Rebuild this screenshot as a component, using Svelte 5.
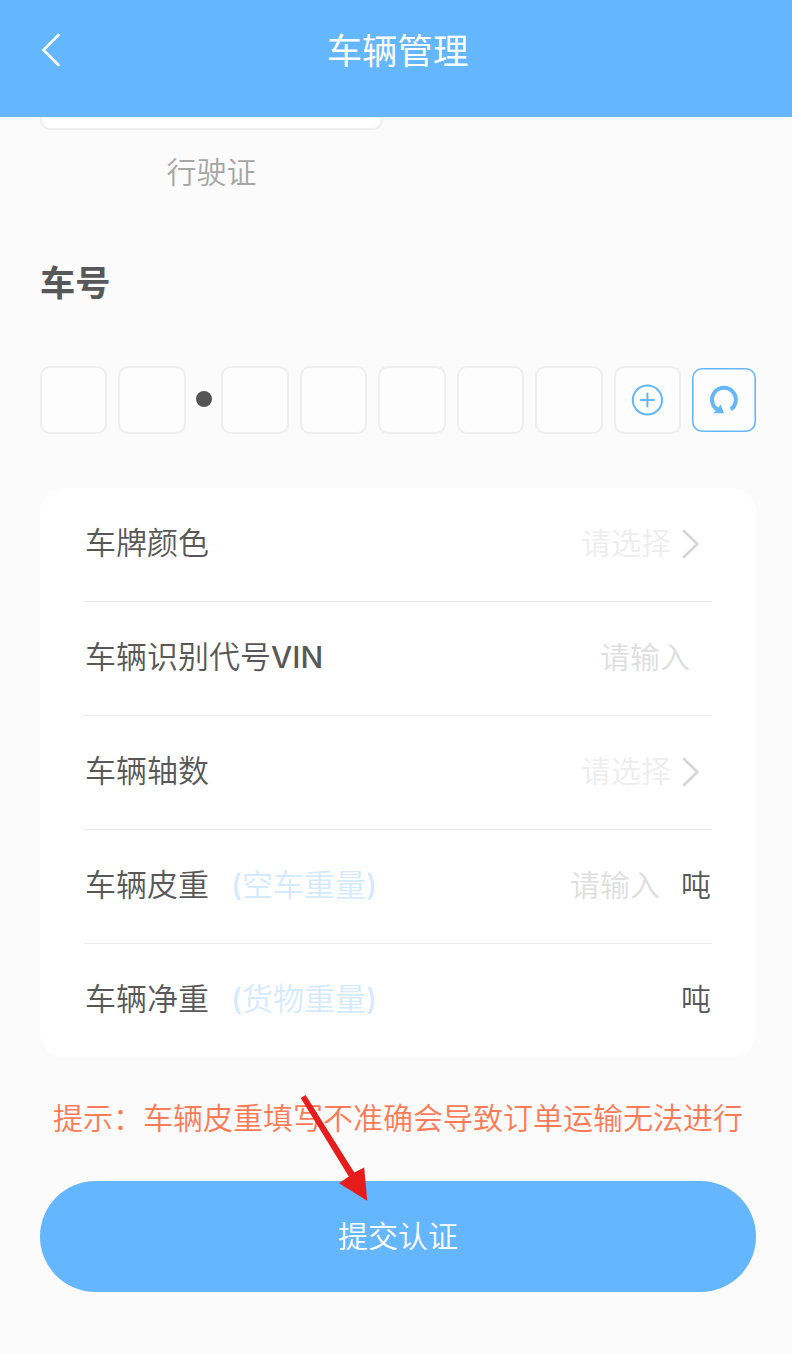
<script lang="ts">
	type Row = {
		label: string;
		latin?: string;
		note?: string;
		placeholder?: string;
		select?: boolean;
		unit?: string;
	};

	const prefix = [0, 1];
	const cells = [2, 3, 4, 5, 6];

	const rows: Row[] = [
		{ label: '车牌颜色', placeholder: '请选择', select: true },
		{ label: '车辆识别代号', latin: 'VIN', placeholder: '请输入' },
		{ label: '车辆轴数', placeholder: '请选择', select: true },
		{ label: '车辆皮重', note: '空车重量', placeholder: '请输入', unit: '吨' },
		{ label: '车辆净重', note: '货物重量', unit: '吨' }
	];
</script>

<div class="page">
	<header class="header">
		<svg class="header__back" width="20" height="34" viewBox="0 0 20 34">
			<path d="M17.5 2 2.5 17 17.5 32" />
		</svg>
		<h1 class="header__title">车辆管理</h1>
	</header>

	<main class="content">
		<div class="license">
			<div class="license__photo"></div>
			<div class="license__caption">行驶证</div>
		</div>

		<h2 class="subtitle">车号</h2>

		<div class="plate">
			{#each prefix as cell (cell)}
				<div class="plate__cell"></div>
			{/each}
			<span class="plate__dot"></span>
			{#each cells as cell (cell)}
				<div class="plate__cell"></div>
			{/each}
			<div class="plate__cell">
				<svg width="32" height="32" viewBox="0 0 32 32" fill="none" stroke="#64b6ff" stroke-width="2">
					<circle cx="16.4" cy="16" r="14.6" />
					<path d="M9.2 16h14.4M16.4 8.8v14.4" />
				</svg>
			</div>
			<div class="plate__reset">
				<svg width="30" height="30" viewBox="0 0 30 30">
					<path d="M8 24.4A11.9 11.9 0 1 1 21.8 24.4" fill="none" stroke="#64b6ff" stroke-width="4" />
					<path d="M11.6 19.4 15 28.2H4.8Z" fill="#64b6ff" />
				</svg>
			</div>
		</div>

		<div class="card">
			{#each rows as row (row.label)}
				<div class="row">
					<span class="row__label">{row.label}{#if row.latin}<b>{row.latin}</b>{/if}</span>
					{#if row.note}<span class="row__note"><b>(</b>{row.note}<b>)</b></span>{/if}
					<div class="row__value" class:row__value--select={row.select} class:row__value--unit={row.unit}>
						{#if row.placeholder}<span class="row__placeholder">{row.placeholder}</span>{/if}
						{#if row.select}
							<svg width="18" height="30" viewBox="0 0 18 30">
								<path d="M2 2 15.3 15 2 28" />
							</svg>
						{/if}
						{#if row.unit}<span class="row__unit">{row.unit}</span>{/if}
					</div>
				</div>
			{/each}
		</div>

		<p class="hint">提示：车辆皮重填写不准确会导致订单运输无法进行</p>

		<button class="submit">提交认证</button>
	</main>

	<svg class="pointer" width="68" height="110" viewBox="0 0 68 110">
		<path d="M.7 4 5.6 1 54.3 78.5 64.2 73.5 67.2 106.7 39 89.2 48.8 82.5Z" fill="#e71c1c" />
	</svg>
</div>

<style>
	:global(body) {
		margin: 0;
		background: #fbfbfb;
	}
	.page {
		position: relative;
		box-sizing: border-box;
		width: 792px;
		height: 1354px;
		overflow: hidden;
		background: #fbfbfb;
		color: #585858;
		font-family: "Noto Sans CJK SC", sans-serif;
		font-size: 30px;
		font-weight: 350;
	}

	.header {
		display: grid;
		grid-template-columns: 60px 1fr 60px;
		align-items: center;
		box-sizing: border-box;
		height: 117px;
		padding: 0 0 17px 0;
		background: #64b6ff;
		color: #fff;
	}
	.header__back {
		justify-self: end;
		margin-right: -1px;
		fill: none;
		stroke: #fff;
		stroke-width: 2.6;
		stroke-linecap: round;
	}
	.header__title {
		margin: 0 0 2px 3px;
		font-size: 35.4px;
		line-height: 50px;
		font-weight: 400;
		text-align: center;
	}

	.content {
		padding: 0 36px 0 40px;
	}

	.license {
		width: 343px;
		text-align: center;
	}
	.license__photo {
		box-sizing: border-box;
		height: 13px;
		border: 2px solid #eee;
		border-top: 0;
		border-radius: 0 0 10px 10px;
		background: #fff;
	}
	.license__caption {
		margin-top: 18px;
		line-height: 44px;
		color: #a6a6a6;
	}

	.subtitle {
		margin: 64px 0 0;
		font-size: 35.2px;
		line-height: 50px;
		font-weight: 700;
	}

	.plate {
		display: flex;
		align-items: center;
		gap: 11.2px;
		height: 68px;
		margin-top: 60px;
	}
	.plate__cell,
	.plate__reset {
		display: flex;
		flex: none;
		align-items: center;
		justify-content: center;
		box-sizing: border-box;
		width: 67.3px;
		height: 68px;
		border: 2px solid #eee;
		border-radius: 10px;
		background: #fdfdfd;
	}
	.plate__reset {
		width: 63.6px;
		height: 64px;
		border: 0;
		box-shadow: inset 0 0 0 1.6px #64b6ff;
	}
	.plate__dot {
		flex: none;
		width: 16px;
		height: 16px;
		margin: -2px -1.7px 0 -1.2px;
		border-radius: 50%;
		background: #555;
	}

	.card {
		margin-top: 54px;
		padding: 0 44px;
		border-radius: 24px;
		background: #fff;
	}
	.row {
		display: flex;
		align-items: center;
		box-sizing: border-box;
		height: 114px;
		padding-bottom: 7px;
		border-bottom: 1px solid #ebecee;
		font-size: 31px;
		line-height: 44px;
	}
	.row:last-child {
		height: 113px;
		border-bottom: 0;
	}
	.row__label {
		margin-left: 1px;
	}
	.row__label b,
	.row__note b {
		font-family: Inter, Roboto, sans-serif;
		font-size: 30px;
		line-height: 1;
		font-weight: 500;
	}
	.row__note {
		margin-left: 22px;
		color: #d5eaff;
	}
	.row__value {
		display: flex;
		align-items: center;
		margin-left: auto;
		padding-right: 22px;
		font-size: 30px;
	}
	.row__value--select {
		padding-right: 12px;
	}
	.row__value--unit {
		padding-right: 1px;
	}
	.row__value svg {
		margin: 6px 0 0 11px;
		fill: none;
		stroke: #d6d6d6;
		stroke-width: 2.6;
		stroke-linecap: round;
	}
	.row__placeholder {
		color: #dedede;
	}
	.row__value--select .row__placeholder {
		color: #ededed;
	}
	.row__unit {
		margin-left: 21px;
	}

	.hint {
		margin: 37px 0 0 13px;
		line-height: 44px;
		white-space: nowrap;
		color: #ff7b57;
	}

	.submit {
		display: block;
		width: 100%;
		height: 111px;
		margin-top: 43px;
		padding: 0 0 6px;
		border: 0;
		border-radius: 56px;
		background: #64b6ff;
		color: #fff;
		font: inherit;
	}

	/* arrow drawn over the form */
	.pointer {
		position: absolute;
		left: 300px;
		top: 1094px;
	}
</style>
